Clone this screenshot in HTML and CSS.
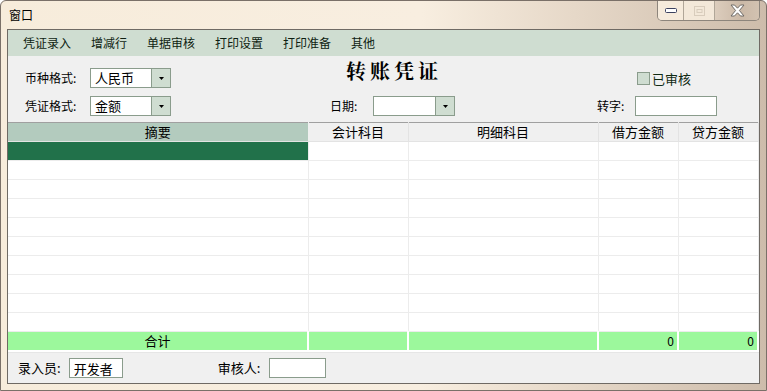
FILE: index.html
```html
<!DOCTYPE html>
<html>
<head>
    <meta charset="utf-8"/>
    <title>窗口</title>
    <link rel="stylesheet" href="styles.css">
</head>
<body>
<div class="win">
    <!--标题栏-->
    <div class="titleBar">
        <span class="titleText">窗口</span>
        <div class="capBtns">
            <div class="capBtn capMin">
                <svg width="12" height="5" viewBox="0 0 12 5"><rect x="0.5" y="0.5" width="11" height="4" rx="1" fill="#fff" stroke="#3c4260"/></svg>
            </div>
            <div class="capBtn capMax">
                <svg width="11" height="10" viewBox="0 0 11 10"><rect x="0.5" y="0.5" width="10" height="9" fill="none" stroke="#d8ccbc"/><rect x="3" y="3.5" width="5" height="3" fill="none" stroke="#d8ccbc"/></svg>
            </div>
            <div class="capBtn capClose">
                <svg width="15" height="13" viewBox="0 0 15 13"><path d="M1 1h3.5l3 3.2 3-3.2h3.5l-4.6 5.5 4.6 5.5h-3.5l-3-3.2-3 3.2h-3.5l4.6-5.5z" fill="#fff" stroke="#6e6a66" stroke-width="1"/></svg>
            </div>
        </div>
    </div>

    <div class="client">
        <!--菜单-->
        <ul class="menuBar">
            <li>凭证录入</li>
            <li>增减行</li>
            <li>单据审核</li>
            <li>打印设置</li>
            <li>打印准备</li>
            <li>其他</li>
        </ul>

        <!--表头-->
        <div class="head">
            <div class="headRow rowOne">
                <label class="lbl lblWide">币种格式:</label>
                <div class="combo"><span class="comboText">人民币</span><span class="comboBtn"></span></div>
                <div class="docTitle">转账凭证</div>
                <div class="chk"><span class="chkBox"></span>已审核</div>
            </div>
            <div class="headRow rowTwo">
                <label class="lbl lblWide">凭证格式:</label>
                <div class="combo"><span class="comboText">金额</span><span class="comboBtn"></span></div>
                <label class="lbl lblDate">日期:</label>
                <div class="combo comboDate"><span class="comboText"></span><span class="comboBtn"></span></div>
                <label class="lbl lblZz">转字:</label>
                <input class="txt txtZz" type="text">
            </div>
        </div>

        <!--分录表格-->
        <table class="grid">
            <colgroup>
                <col style="width:300px">
                <col style="width:100px">
                <col style="width:190px">
                <col style="width:80px">
                <col style="width:80px">
            </colgroup>
            <thead>
            <tr>
                <th class="thMain">摘要</th>
                <th>会计科目</th>
                <th>明细科目</th>
                <th>借方金额</th>
                <th>贷方金额</th>
            </tr>
            </thead>
            <tbody>
            <tr><td class="sel"></td><td></td><td></td><td></td><td></td></tr>
            <tr><td></td><td></td><td></td><td></td><td></td></tr>
            <tr><td></td><td></td><td></td><td></td><td></td></tr>
            <tr><td></td><td></td><td></td><td></td><td></td></tr>
            <tr><td></td><td></td><td></td><td></td><td></td></tr>
            <tr><td></td><td></td><td></td><td></td><td></td></tr>
            <tr><td></td><td></td><td></td><td></td><td></td></tr>
            <tr><td></td><td></td><td></td><td></td><td></td></tr>
            <tr><td></td><td></td><td></td><td></td><td></td></tr>
            <tr><td></td><td></td><td></td><td></td><td></td></tr>
            <tr class="sumRow">
                <td class="center">合计</td>
                <td></td>
                <td></td>
                <td class="num">0</td>
                <td class="num">0</td>
            </tr>
            </tbody>
        </table>

        <!--底部-->
        <div class="foot">
            <label class="lbl">录入员:</label>
            <input class="txt txtUser" type="text" value="开发者">
            <label class="lbl lblCheck">审核人:</label>
            <input class="txt txtCheck" type="text">
        </div>
    </div>
</div>
</body>
</html>
```

FILE: styles.css
```css
body {
    margin: 0;
    font-family: "Noto Sans CJK SC", "Liberation Sans", sans-serif;
    font-size: 12px;
    color: #000;
    background: #fff;
}

.win {
    width: 767px;
    height: 391px;
    box-sizing: border-box;
    padding: 0 6px 6px 6px;
    background: linear-gradient(to right, #f7ecdb 0%, #f8eee0 55%, #e6d8c8 75%, #cdbcab 100%);
    border-radius: 6px 6px 0 0;
    border: 1px solid #7a7068;
    display: flex;
    flex-direction: column;
}

.titleBar {
    height: 28px;
    display: flex;
    justify-content: space-between;
    align-items: flex-start;
}

.titleText {
    margin-top: 6px;
    margin-left: 2px;
    line-height: 16px;
    color: #000;
}

.capBtns {
    display: flex;
    height: 19px;
    border: 1px solid #8d857c;
    border-top: 0;
    border-radius: 0 0 5px 5px;
    overflow: hidden;
    margin-right: 0;
}

.capBtn {
    display: flex;
    align-items: center;
    justify-content: center;
    border-left: 1px solid #b0a698;
}

.capMin {
    width: 25px;
    border-left: 0;
    background: #f6ebdc;
}

.capMax {
    width: 30px;
    background: #f3e8d9;
}

.capClose {
    width: 44px;
    background: linear-gradient(to right, #dccdbd, #cbb9a7 60%, #d2c2b1);
}

.client {
    flex: 1;
    background: #f0f0f0;
    border: 1px solid #6f6a64;
    display: flex;
    flex-direction: column;
}

.menuBar {
    list-style: none;
    margin: 0;
    padding: 0 0 0 15px;
    height: 26px;
    background: #cfddd1;
    display: flex;
    align-items: center;
}

.menuBar li {
    margin-right: 20px;
    line-height: 16px;
    color: #0e1e12;
}

.head {
    height: 66px;
    box-sizing: border-box;
    padding: 12px 0 0 17px;
    display: flex;
    flex-direction: column;
    gap: 8px;
}

.headRow {
    display: flex;
    align-items: center;
    height: 20px;
}

.lbl {
    line-height: 16px;
    white-space: nowrap;
}

.lblWide {
    width: 65px;
}

.combo {
    width: 81px;
    height: 20px;
    box-sizing: border-box;
    border: 1px solid #8a9c8c;
    background: #fff;
    display: flex;
}

.comboText {
    flex: 1;
    line-height: 18px;
    padding-left: 4px;
    font-size: 13px;
}

.comboBtn {
    width: 18px;
    background: #cfddd1 url("data:image/svg+xml,%3Csvg xmlns='http://www.w3.org/2000/svg' width='5' height='3'%3E%3Cpath d='M0 0h5L2.5 3z' fill='%23000'/%3E%3C/svg%3E") no-repeat center;
    border-left: 1px solid #8a9c8c;
}

.comboDate {
    width: 82px;
}

.docTitle {
    margin-left: 175px;
    margin-top: -14px;
    font-family: "Noto Serif CJK SC", "Noto Sans CJK SC", serif;
    font-size: 20px;
    font-weight: bold;
    letter-spacing: 4px;
    line-height: 24px;
}

.chk {
    margin-left: 195px;
    display: flex;
    align-items: center;
    color: #102a14;
    font-size: 13px;
}

.chkBox {
    width: 11px;
    height: 11px;
    border: 1px solid #8a9c8c;
    background: #cfddd1;
    margin-right: 2px;
}

.lblDate {
    margin-left: 159px;
    width: 43px;
}

.lblZz {
    margin-left: 142px;
    width: 38px;
}

.txt {
    height: 20px;
    box-sizing: border-box;
    border: 1px solid #8a9c8c;
    background: #fff;
    font-family: inherit;
    font-size: 13px;
    padding: 0 4px;
    margin: 0;
    outline: none;
}

.txtZz {
    width: 82px;
}

.grid {
    width: 750px;
    border-collapse: collapse;
    table-layout: fixed;
    background: #fff;
    border-top: 1px solid #a0a0a0;
}

.grid th {
    height: 18px;
    padding: 0;
    font-weight: normal;
    background: #f0f0f0;
    border-right: 1px solid #e3e3e3;
    border-bottom: 1px solid #e3e3e3;
    line-height: 16px;
    font-size: 13px;
}

.grid .thMain {
    background: #b3cbbe;
    border-right: 1px solid #f0f0f0;
}

.grid td {
    height: 18px;
    padding: 0;
    border-right: 1px solid #ececec;
    border-bottom: 1px solid #ececec;
}

.grid td.sel {
    background: #21714a;
}

.sumRow td {
    background: #9cf89c;
    border-right: 2px solid #fff;
    border-bottom: 2px solid #fff;
    line-height: 16px;
}

.sumRow td.center {
    text-align: center;
    font-size: 13px;
}

.sumRow td.num {
    text-align: right;
    padding-right: 3px;
}

.foot {
    flex: 1;
    display: flex;
    align-items: center;
    padding-left: 10px;
    border-top: 1px solid #e6e6e6;
}

.foot .lbl {
    font-size: 13px;
}

.txtUser {
    width: 54px;
    margin-left: 8px;
}

.lblCheck {
    margin-left: 95px;
}

.txtCheck {
    width: 57px;
    margin-left: 9px;
}
```
